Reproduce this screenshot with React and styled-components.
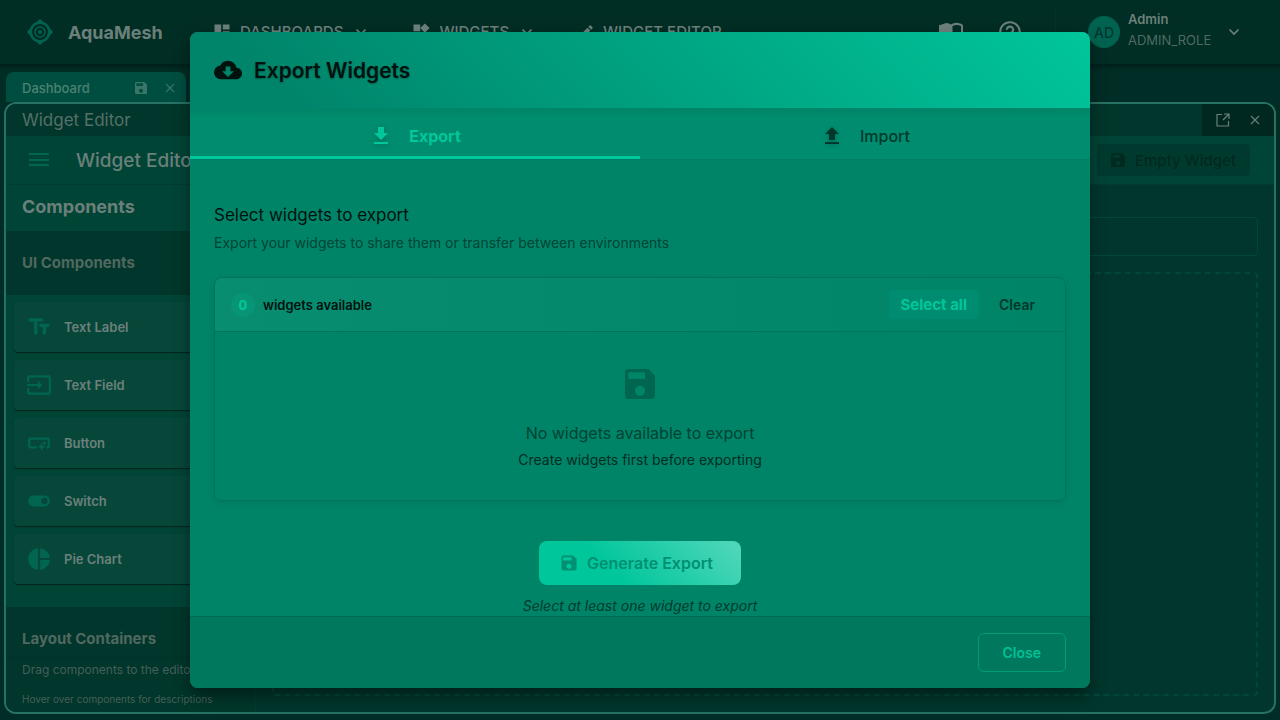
import React from "react";
import styled, { createGlobalStyle } from "styled-components";
import { MdSave, MdCloudDownload, MdDownload, MdUpload, MdDashboard, MdWidgets, MdEdit, MdTextFields, MdInput, MdSmartButton, MdToggleOn, MdPieChart, MdHelpOutline } from "react-icons/md";

const Global = createGlobalStyle`
  *, *::before, *::after { box-sizing: border-box; }
  body { margin: 0; background: #002d25; font-family: Inter, "Liberation Sans", sans-serif; color: #000; }
  h1, h2, h3, p { margin: 0; font: inherit; }
  ul { list-style: none; margin: 0; padding: 0; }
  button { font: inherit; color: inherit; border: 0; background: none; padding: 0; }
  svg { display: block; flex: none; }
`;

const Page = styled.div`
  position: relative;
  height: 100vh;
  overflow: hidden;
  display: flex;
  flex-direction: column;
  background: #002d25;
  color: #6c807b;
`;

const TopBar = styled.header`
  height: 65px;
  flex: none;
  display: flex;
  align-items: center;
  padding: 0 40px 0 24px;
  background: #002d24;
  border-bottom: 1px solid #00211b;
  box-shadow: 0 2px 4px rgba(0, 0, 0, 0.3);
`;

const Brand = styled.h1`
  display: flex;
  align-items: center;
  gap: 12px;
  width: 188px;
  font-size: 18px;
  font-weight: 700;
`;

const Nav = styled.nav`
  flex: 1;
  display: flex;
  gap: 44px;
`;

const NavButton = styled.button`
  display: flex;
  align-items: center;
  gap: 8px;
  font-size: 15px;
  line-height: 20px;
  font-weight: 500;
  svg:last-child:not(:first-child) { margin-left: 4px; }
`;

const HeaderTools = styled.div`
  display: flex;
  align-items: center;
  gap: 34px;
  height: 54px;
  padding-right: 32px;
  border-right: 1px solid #003329;
  margin-right: 32px;
`;

const Account = styled.button`
  display: flex;
  align-items: center;
  gap: 8px;
  text-align: left;
`;

const Avatar = styled.span`
  width: 32px;
  height: 32px;
  border-radius: 50%;
  display: grid;
  place-items: center;
  background: #00634f;
  color: #00372d;
  font-size: 14px;
  font-weight: 500;
`;

const AccountText = styled.span`
  display: flex;
  flex-direction: column;
  width: 92px;
  padding-bottom: 4px;
  font-size: 13px;
  line-height: 21px;
  font-weight: 600;
  small { font-size: 13px; font-weight: 400; color: #4f6a63; }
`;

const TabStrip = styled.div`
  flex: none;
  padding: 7px 6px 0;
`;

const DashTab = styled.div`
  width: 180px;
  height: 30px;
  display: flex;
  align-items: center;
  gap: 16px;
  padding: 2px 11px 0 16px;
  border-radius: 8px 8px 0 0;
  background: #004e3f;
  color: #4c8273;
  font-size: 13px;
  font-weight: 500;
  span { flex: 1; }
  button { color: #3a7668; }
`;

const Frame = styled.main`
  flex: 1;
  min-height: 0;
  display: flex;
  flex-direction: column;
  margin: 0 4px 6px;
  border: 2px solid #277263;
  border-radius: 12px;
  overflow: hidden;
  background: #00362c;
`;

const FrameTitle = styled.div`
  height: 32px;
  flex: none;
  display: flex;
  justify-content: space-between;
  background: #00362b;
  font-size: 17px;
  line-height: 32px;
  color: #567069;
  padding-left: 16px;
`;

const WindowTools = styled.div`
  width: 72px;
  display: flex;
  align-items: center;
  justify-content: center;
  gap: 20px;
  background: #002820;
  color: #6c807b;
`;

const EditorBar = styled.div`
  height: 49px;
  flex: none;
  display: flex;
  align-items: center;
  gap: 24px;
  padding: 0 24px 0 20px;
  background: #004436;
  border-bottom: 1px solid #003b30;
  h2 { flex: 1; font-size: 19px; font-weight: 500; }
`;

const EmptyWidget = styled.button`
  display: flex;
  align-items: center;
  gap: 8px;
  height: 32px;
  padding: 0 14px 0 12px;
  border-radius: 4px;
  background: #003a2f;
  color: #00291f;
  font-size: 15px;
  font-weight: 500;
`;

const Workspace = styled.div`
  flex: 1;
  min-height: 0;
  display: flex;
`;

const Sidebar = styled.aside`
  width: 250px;
  display: flex;
  flex-direction: column;
  background: #004436;
  border-right: 1px solid #003b30;
`;

const SideTitle = styled.h2`
  flex: none;
  padding: 0 16px;
  height: 46px;
  line-height: 44px;
  font-size: 18px;
  font-weight: 700;
`;

const SideGroup = styled.h3`
  flex: none;
  padding: 0 16px;
  height: 64px;
  line-height: 64px;
  background: #00362b;
  color: #50685f;
  font-size: 15px;
  font-weight: 700;
`;

const ItemList = styled.ul`
  display: flex;
  flex-direction: column;
  gap: 8px;
  padding: 7px 8px 23px;
`;

const Item = styled.li`
  height: 50px;
  flex: none;
  display: flex;
  align-items: center;
  gap: 12px;
  padding: 0 12px;
  border-radius: 4px;
  background: #07473a;
  box-shadow: 0 1px 1px rgba(0, 0, 0, 0.5);
  font-size: 13px;
  font-weight: 600;
  svg { color: #006650; }
`;

const SideHelp = styled.div`
  flex: 1;
  margin-top: -14px;
  padding: 0 16px;
  border-top: 1px solid #003027;
  background: #00362b;
  color: #465f58;
  white-space: nowrap;
  overflow: hidden;
  font-size: 12px;
  line-height: 24px;
  small { display: block; margin-top: 5px; font-size: 10px; }
`;

const Canvas = styled.section`
  flex: 1;
  display: flex;
  flex-direction: column;
  gap: 16px;
  padding: 32px 16px 16px;
`;

const NameField = styled.input`
  height: 39px;
  width: 100%;
  border: 1px solid #00493a;
  border-radius: 4px;
  background: transparent;
`;

const DropArea = styled.div`
  flex: 1;
  border: 2px dashed #00473a;
  border-radius: 4px;
`;

const Overlay = styled.div`
  position: absolute;
  inset: 0;
  display: flex;
  justify-content: center;
  padding: 32px;
`;

const Dialog = styled.section`
  width: 100%;
  max-width: 900px;
  display: flex;
  flex-direction: column;
  border-radius: 8px;
  overflow: hidden;
  background: #008468;
  color: #00120e;
  box-shadow: 0 8px 16px rgba(0, 0, 0, 0.4);
`;

const DialogHeader = styled.header`
  height: 76px;
  flex: none;
  display: flex;
  align-items: center;
  gap: 12px;
  padding: 0 24px;
  background: linear-gradient(45deg, #00846a 10%, #00c69c 100%);
  color: #00120e;
  h2 { font-size: 21px; font-weight: 600; text-shadow: 0 1px 2px rgba(0, 0, 0, 0.3); }
`;

const Tabs = styled.div`
  height: 52px;
  flex: none;
  display: grid;
  grid-template-columns: 1fr 1fr;
  background: linear-gradient(#008467, #008c6e 10px);
  border-bottom: 1px solid #007e63;
`;

const Tab = styled.button`
  display: flex;
  align-items: center;
  justify-content: center;
  gap: 16px;
  padding-top: 7px;
  font-size: 16px;
  font-weight: ${({ $active }) => ($active ? 700 : 500)};
  color: ${({ $active }) => ($active ? "#00c89c" : "#00382c")};
  border-bottom: 3px solid ${({ $active }) => ($active ? "#00c89c" : "transparent")};
  svg { filter: drop-shadow(0 1px 2px rgba(0, 0, 0, 0.2)); }
`;

const Body = styled.div`
  flex: 1;
  min-height: 0;
  overflow: hidden;
  padding: 43px 24px 0;
  display: flex;
  flex-direction: column;
`;

const BodyTitle = styled.h3`
  font-size: 17px;
  line-height: 24px;
`;

const BodyText = styled.p`
  margin-top: 6px;
  font-size: 14px;
  line-height: 20px;
  color: #004534;
`;

const Panel = styled.section`
  flex: none;
  margin-top: 24px;
  border: 1px solid #00745b;
  border-radius: 8px;
  overflow: hidden;
  box-shadow: 0 2px 6px rgba(0, 60, 45, 0.15);
`;

const PanelBar = styled.div`
  height: 54px;
  display: flex;
  align-items: center;
  gap: 8px;
  padding: 0 18px 0 16px;
  border-bottom: 1px solid #00745b;
  background: linear-gradient(90deg, #088d70, #008468);
  font-size: 13px;
  font-weight: 600;
  p { flex: 1; }
`;

const Count = styled.span`
  width: 24px;
  height: 24px;
  display: grid;
  place-items: center;
  border-radius: 50%;
  background: #079576;
  color: #00c99d;
  font-weight: 700;
`;

const SmallButton = styled.button`
  height: 29px;
  padding: 0 12px;
  border-radius: 4px;
  font-size: ${({ $accent }) => ($accent ? "15px" : "14px")};
  font-weight: ${({ $accent }) => ($accent ? 700 : 600)};
  background: ${({ $accent }) => ($accent ? "#008c70" : "transparent")};
  color: ${({ $accent }) => ($accent ? "#00c79b" : "#00392c")};
`;

const Empty = styled.div`
  display: flex;
  flex-direction: column;
  align-items: center;
  padding: 32px 16px 27px;
  font-size: 16px;
  line-height: 26px;
  color: #004333;
  svg { color: #006650; margin-bottom: 16px; }
  small { font-size: 14px; line-height: 27px; color: #002d22; }
`;

const Generate = styled.button`
  flex: none;
  align-self: center;
  height: 44px;
  display: flex;
  align-items: center;
  gap: 8px;
  margin-top: 40px;
  padding: 0 28px 0 20px;
  border-radius: 8px;
  background: linear-gradient(45deg, #00c69c 35%, #4dd6b9 95%);
  color: #009073;
  font-size: 16px;
  font-weight: 600;
`;

const Hint = styled.p`
  margin-top: 11px;
  text-align: center;
  font-size: 14px;
  line-height: 20px;
  font-style: italic;
  color: #003b2d;
`;

const Footer = styled.footer`
  height: 72px;
  flex: none;
  display: flex;
  align-items: center;
  justify-content: flex-end;
  padding: 0 24px;
  border-top: 1px solid #006b54;
  background: #00785e;
`;

const CloseButton = styled.button`
  height: 39px;
  padding: 0 24px;
  border: 1px solid #009c7a;
  border-radius: 6px;
  color: #00c196;
  font-size: 14px;
  font-weight: 600;
`;

const Logo = () => (
  <svg width="32" height="32" viewBox="0 0 32 32" fill="none" stroke="#00634f" aria-hidden="true">
    <path fill="#00634f" stroke="none" fillRule="evenodd" d="M16 3l3.500 3a11 11 0 0 1 6.500 6.500L29 16l-3 3.500a11 11 0 0 1-6.500 6.500L16 29l-3.500-3A11 11 0 0 1 6 19.500L3 16l3-3.500A11 11 0 0 1 12.500 6ZM16 8a8 8 0 1 0 0 16a8 8 0 1 0 0-16Z" />
    <circle cx="16" cy="16" r="5" strokeWidth="1.500" />
    <circle cx="16" cy="16" r="2" fill="#00634f" stroke="none" />
  </svg>
);

const Chevron = () => (
  <svg width="12" height="8" viewBox="0 0 12 8" fill="none" stroke="currentColor" strokeWidth="1.700" aria-hidden="true">
    <path d="M1.500 1.500L6 6l4.500-4.500" />
  </svg>
);

const Cross = () => (
  <svg width="10" height="10" viewBox="0 0 10 10" stroke="currentColor" strokeWidth="1.100" aria-hidden="true">
    <path d="M1 1l8 8M9 1L1 9" />
  </svg>
);

const Popout = () => (
  <svg width="14" height="14" viewBox="0 0 14 14" fill="none" stroke="currentColor" strokeWidth="1.200" aria-hidden="true">
    <path d="M6 1.500H1v11.500h11.500V8M8 1h5v5M13 1L7 7" />
  </svg>
);

const MenuLines = () => (
  <svg width="26" height="24" viewBox="0 0 26 24" stroke="#006650" strokeWidth="2" aria-hidden="true">
    <path d="M3 6h20M3 12h20M3 17h20" />
  </svg>
);

const Book = () => (
  <svg width="24" height="20" viewBox="0 0 24 20" aria-hidden="true">
    <path fill="currentColor" fillRule="evenodd" d="M3 2.500Q8-.5 12 2.500Q16-.5 21 1.500Q24 2 24 4v15q-6-2-12 1q-6-3-12-1V4q0-1.500 3-1.500ZM13.500 4v12q4-1.500 8.500-1V4q-4-2-8.500 0Z" />
  </svg>
);

const items = [
  ["Text Label", MdTextFields],
  ["Text Field", MdInput],
  ["Button", MdSmartButton],
  ["Switch", MdToggleOn],
  ["Pie Chart", MdPieChart],
];

export default function App() {
  return (
    <>
      <Global />
      <Page>
        <TopBar>
          <Brand><Logo />AquaMesh</Brand>
          <Nav>
            <NavButton><MdDashboard size={20} />DASHBOARDS<Chevron /></NavButton>
            <NavButton><MdWidgets size={20} />WIDGETS<Chevron /></NavButton>
            <NavButton><MdEdit size={18} />WIDGET EDITOR</NavButton>
          </Nav>
          <HeaderTools>
            <button aria-label="Documentation"><Book /></button>
            <button aria-label="Help"><MdHelpOutline size={26} /></button>
          </HeaderTools>
          <Account>
            <Avatar>AD</Avatar>
            <AccountText>Admin<small>ADMIN_ROLE</small></AccountText>
            <Chevron />
          </Account>
        </TopBar>
        <TabStrip>
          <DashTab>
            <span>Dashboard</span>
            <button aria-label="Save dashboard"><MdSave size={16} /></button>
            <button aria-label="Close dashboard"><Cross /></button>
          </DashTab>
        </TabStrip>
        <Frame>
          <FrameTitle>
            Widget Editor
            <WindowTools>
              <button aria-label="Pop out"><Popout /></button>
              <button aria-label="Close panel"><Cross /></button>
            </WindowTools>
          </FrameTitle>
          <EditorBar>
            <button aria-label="Toggle menu"><MenuLines /></button>
            <h2>Widget Editor</h2>
            <EmptyWidget><MdSave size={18} />Empty Widget</EmptyWidget>
          </EditorBar>
          <Workspace>
            <Sidebar>
              <SideTitle>Components</SideTitle>
              <SideGroup>UI Components</SideGroup>
              <ItemList>
                {items.map(([label, Icon]) => (
                  <Item key={label}><Icon size={26} />{label}</Item>
                ))}
              </ItemList>
              <SideGroup>Layout Containers</SideGroup>
              <SideHelp>
                Drag components to the editor area
                <small>Hover over components for descriptions</small>
              </SideHelp>
            </Sidebar>
            <Canvas>
              <NameField aria-label="Widget name" />
              <DropArea />
            </Canvas>
          </Workspace>
        </Frame>
        <Overlay>
          <Dialog role="dialog" aria-labelledby="export-title">
            <DialogHeader>
              <MdCloudDownload size={28} />
              <h2 id="export-title">Export Widgets</h2>
            </DialogHeader>
            <Tabs role="tablist">
              <Tab role="tab" aria-selected="true" $active><MdDownload size={24} />Export</Tab>
              <Tab role="tab" aria-selected="false"><MdUpload size={24} />Import</Tab>
            </Tabs>
            <Body>
              <BodyTitle>Select widgets to export</BodyTitle>
              <BodyText>Export your widgets to share them or transfer between environments</BodyText>
              <Panel>
                <PanelBar>
                  <Count>0</Count>
                  <p>widgets available</p>
                  <SmallButton $accent>Select all</SmallButton>
                  <SmallButton>Clear</SmallButton>
                </PanelBar>
                <Empty>
                  <MdSave size={40} />
                  <p>No widgets available to export</p>
                  <small>Create widgets first before exporting</small>
                </Empty>
              </Panel>
              <Generate disabled><MdSave size={20} />Generate Export</Generate>
              <Hint>Select at least one widget to export</Hint>
            </Body>
            <Footer><CloseButton>Close</CloseButton></Footer>
          </Dialog>
        </Overlay>
      </Page>
    </>
  );
}
